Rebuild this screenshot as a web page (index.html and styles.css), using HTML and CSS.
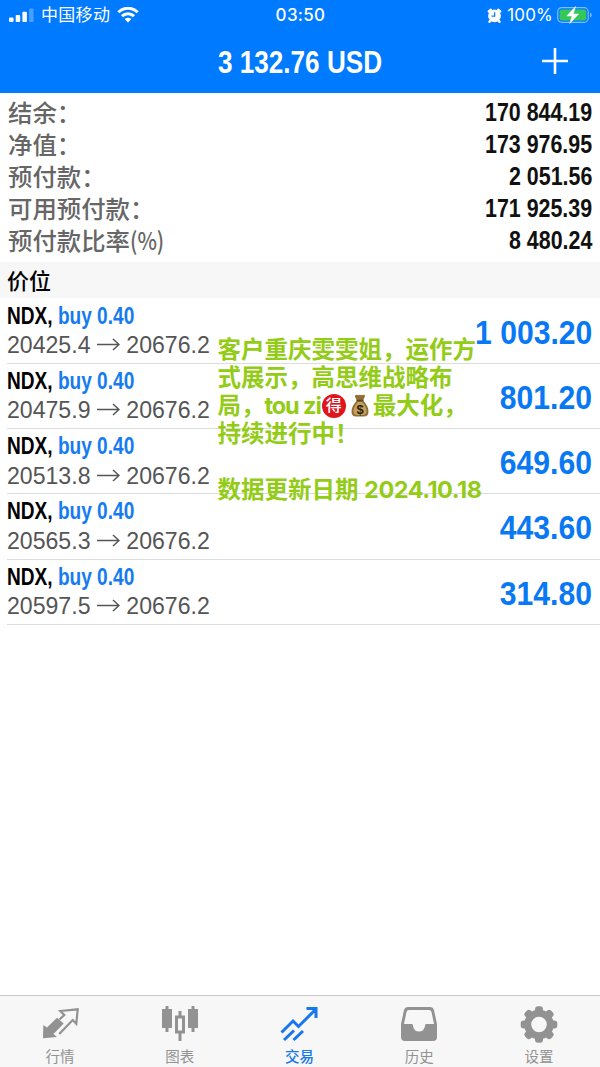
FILE: index.html
```html
<!DOCTYPE html>
<html lang="zh-CN">
    <head>
        <meta charset="utf-8">
        <title>交易</title>
        <link rel="stylesheet" href="styles.css">
    </head>
    <body>
        <header>
            <div class="status">
                <div class="carrier">
                    <svg width="25" height="14" viewBox="0 0 25 14" fill="#fff">
                        <rect x="0" y="9.5" width="4.5" height="4.5" rx="1"/>
                        <rect x="6.7" y="7" width="4.5" height="7" rx="1"/>
                        <rect x="13.4" y="3.8" width="4.5" height="10.2" rx="1"/>
                        <rect x="20.1" y="0.5" width="4.5" height="13.5" rx="1" opacity=".28"/>
                    </svg>
                    <span>中国移动</span>
                    <svg width="22" height="17" viewBox="0 0 22 17" fill="none" stroke="#fff" stroke-width="3">
                        <path d="M1.3 5.2a13.8 13.8 0 0 1 19.4 0"/>
                        <path d="M5 9.1a8.6 8.6 0 0 1 12 0"/>
                        <path d="M11 15.6L7.6 12.1a4.9 4.9 0 0 1 6.8 0z" fill="#fff" stroke="none"/>
                    </svg>
                </div>
                <div class="time">03:50</div>
                <div class="power">
                    <svg width="15" height="15" viewBox="0 0 15 15">
                        <circle cx="7.5" cy="7.8" r="6.4" fill="#fff"/>
                        <path d="M1.8 3.4l2-1.7M13.2 3.4l-2-1.7M3.5 12.5l-1 1.3M11.5 12.5l1 1.3" stroke="#fff" stroke-width="2.4" stroke-linecap="round"/>
                        <path d="M7.7 4.2v4H4.6" fill="none" stroke="#007aff" stroke-width="1.2"/>
                    </svg>
                    <span>100%</span>
                    <svg width="35" height="18" viewBox="0 0 35 18">
                        <rect x=".7" y="1.7" width="30.5" height="14.6" rx="4" fill="none" stroke="#7fbcff" stroke-width="1.2"/>
                        <path d="M33 6.5q1.8.6 1.8 2.5T33 11.5z" fill="#7fbcff"/>
                        <rect x="2.6" y="3.6" width="26.7" height="10.8" rx="2.2" fill="#35c759"/>
                        <path d="M18.5.5L9.8 10h5.3l-2.4 7.5L21.7 8h-5.4z" fill="#fff" stroke="#fff" stroke-width=".5"/>
                    </svg>
                </div>
            </div>
            <div class="titlebar">
                <h1>3 132.76 USD</h1>
                <svg class="plus" width="28" height="28" viewBox="0 0 28 28" stroke="#fff" stroke-width="2.6">
                    <path d="M1 13h26M14 0v26"/>
                </svg>
            </div>
        </header>

        <dl class="account">
            <div><dt>结余：</dt><dd>170 844.19</dd></div>
            <div><dt>净值：</dt><dd>173 976.95</dd></div>
            <div><dt>预付款：</dt><dd>2 051.56</dd></div>
            <div><dt>可用预付款：</dt><dd>171 925.39</dd></div>
            <div><dt>预付款比率<span class="unit">(%)</span></dt><dd>8 480.24</dd></div>
        </dl>

        <h2>价位</h2>

        <main>
            <ul class="positions">
                <li>
                    <div><p class="deal">NDX, <b>buy 0.40</b></p><p class="price">20425.4 <svg class="arrow" viewBox="0 0 23 13"><path d="M0 6.5h22M16 1l6 5.5-6 5.5"/></svg> 20676.2</p></div>
                    <div class="profit">1 003.20</div>
                </li>
                <li>
                    <div><p class="deal">NDX, <b>buy 0.40</b></p><p class="price">20475.9 <svg class="arrow" viewBox="0 0 23 13"><path d="M0 6.5h22M16 1l6 5.5-6 5.5"/></svg> 20676.2</p></div>
                    <div class="profit">801.20</div>
                </li>
                <li>
                    <div><p class="deal">NDX, <b>buy 0.40</b></p><p class="price">20513.8 <svg class="arrow" viewBox="0 0 23 13"><path d="M0 6.5h22M16 1l6 5.5-6 5.5"/></svg> 20676.2</p></div>
                    <div class="profit">649.60</div>
                </li>
                <li>
                    <div><p class="deal">NDX, <b>buy 0.40</b></p><p class="price">20565.3 <svg class="arrow" viewBox="0 0 23 13"><path d="M0 6.5h22M16 1l6 5.5-6 5.5"/></svg> 20676.2</p></div>
                    <div class="profit">443.60</div>
                </li>
                <li>
                    <div><p class="deal">NDX, <b>buy 0.40</b></p><p class="price">20597.5 <svg class="arrow" viewBox="0 0 23 13"><path d="M0 6.5h22M16 1l6 5.5-6 5.5"/></svg> 20676.2</p></div>
                    <div class="profit">314.80</div>
                </li>
            </ul>
            <div class="note">
                <p>客户重庆雯雯姐，运作方<br>式展示，高思维战略布<br>局，<span class="latin">tou zi</span><span class="seal">得</span><svg class="bag" viewBox="0 0 18 23">
                    <path d="M6 6.5Q3.5 2.5 4 1.500 5 .3 7 1.200 9 .2 11 1.200 13.500.3 14 1.700 14 3 12 6.500 17.500 12 17.500 17.500 17.500 22.500 13 22.500H5Q.5 22.500.5 17.500.5 12 6 6.500z" fill="#8f6f35"/>
                    <path d="M7 8Q3 12 2.5 17q0 3.5 3 4h7q3-.5 3-4Q15 12 11 8z" fill="#c4a25c"/>
                    <path d="M5.5 6.5h7" stroke="#5e4520" stroke-width="1.6"/>
                    <text x="9" y="19.5" text-anchor="middle">$</text>
                </svg>最大化，<br>持续进行中！</p>
                <p>数据更新日期 <span class="date">2024.10.18</span></p>
            </div>
        </main>

        <nav>
            <a>
                <svg width="38" height="38" viewBox="0 0 38 38" fill="#929292">
                    <path d="M2.3 19L6 21.5l10-9.8 6.700 5.800L12.500 28l3.500 3-14 1.300z"/>
                    <path d="M18.5 13.5L23.300 9l-4-4 17.400-1.700-1.400 14.400-3.600-3.700-13.500 14" fill="none" stroke="#929292" stroke-width="2.2"/>
                </svg>
                <span>行情</span>
            </a>
            <a>
                <svg width="38" height="38" viewBox="0 0 38 38" fill="#929292">
                    <path d="M4.500 0h3v3H11v19H7.500v4h-3v-4H1V3h3.500zM30.500 0h3v3H37v19h-3.500v4h-3v-4H27V3h3.500z"/>
                    <path fill-rule="evenodd" d="M17.500 5h3v4.500H24v18h-3.500V35h-3v-7.500H14v-18h3.500zM17 12.500v12h4v-12z"/>
                </svg>
                <span>图表</span>
            </a>
            <a class="active">
                <svg width="38" height="38" viewBox="0 0 38 38" fill="none" stroke="#1677ee" stroke-width="3">
                    <path d="M1.5 26.5L13 15l5.5 5.5L35 4M26.5 2.5H36V12M4 34l10-9.5M13.5 34l9.500-9"/>
                </svg>
                <span>交易</span>
            </a>
            <a>
                <svg width="38" height="38" viewBox="0 0 38 38">
                    <path fill="#929292" fill-rule="evenodd" d="M8 1h22q3 0 4 3l3 14v13q0 4-4 4H5q-4 0-4-4V18L4 4q1-3 4-3zM9 4Q7 4 6.500 6L4 18h8q1 0 1 2 1 5.500 6 5.500T25 20q0-2 1-2h8L31.500 6Q31 4 29 4z"/>
                </svg>
                <span>历史</span>
            </a>
            <a>
                <svg width="38" height="38" viewBox="-19 -18.5 38 38">
                    <g fill="#929292">
                        <circle r="14.8"/>
                        <g id="teeth">
                            <rect x="-4" y="-18.3" width="8" height="36.600" rx="3"/>
                            <rect x="-18.300" y="-4" width="36.600" height="8" rx="3"/>
                        </g>
                        <use href="#teeth" transform="rotate(45)"/>
                    </g>
                    <circle r="7.800" fill="#f7f7f7"/>
                </svg>
                <span>设置</span>
            </a>
        </nav>
    </body>
</html>
```
FILE: styles.css
```css
* {
    box-sizing:border-box;
    margin:0;
    padding:0;
}
body {
    width:600px;
    height:1067px;
    display:flex;
    flex-direction:column;
    background:#fff;
    font-family:'Liberation Sans', 'Noto Sans CJK SC', sans-serif;
    overflow:hidden;
}
svg {
    display:block;
    flex:none;
}
header {
    height:93px;
    background:#007aff;
    color:#fff;
}
.status {
    height:30px;
    padding:0 8px 0 9px;
    display:grid;
    grid-template-columns:1fr auto 1fr;
    align-items:center;
    font:17px/30px Inter, 'Noto Sans CJK SC', sans-serif;
}
.carrier, .power {
    display:flex;
    align-items:center;
}
.carrier {
    gap:7px;
    letter-spacing:.3px;
}
.power {
    justify-content:flex-end;
    gap:5px;
    letter-spacing:.2px;
}
.power span {
    margin-right:-1px;
}
.time {
    font-weight:500;
    letter-spacing:.3px;
}
.titlebar {
    height:63px;
    padding:0 31px;
    display:grid;
    grid-template-columns:28px 1fr 28px;
    align-items:center;
}
/* condensed look for the bold figures */
h1, dd, .deal, .profit {
    font-family:'Liberation Sans', sans-serif;
    font-weight:bold;
    white-space:nowrap;
}
h1 {
    grid-column:2;
    text-align:center;
    font-size:32px;
    line-height:62px;
    transform:scaleX(.816);
}
.account {
    height:169px;
    padding:3px 8px 0;
}
.account div {
    display:flex;
    justify-content:space-between;
    height:32px;
    line-height:32px;
}
dt {
    color:#666;
    font-family:'Noto Sans CJK SC', sans-serif;
    font-size:24.4px;
    font-weight:500;
    line-height:31px;
}
.unit {
    display:inline-block;
    transform:scaleX(.85);
    transform-origin:left;
}
dd {
    font-size:25px;
    color:#111;
    transform:scaleX(.856);
    transform-origin:right;
}
h2 {
    height:36px;
    padding-left:7px;
    background:#f7f7f7;
    font:500 22px/34px 'Noto Sans CJK SC', sans-serif;
}
main {
    position:relative;
    flex:1;
}
.positions {
    list-style:none;
    padding-top:.6px;
}
.positions li {
    height:65.3px;
    margin-left:7px;
    padding-right:8px;
    display:flex;
    justify-content:space-between;
    border-bottom:1px solid #dcdcde;
}
.deal {
    font-size:24px;
    line-height:33.6px;
    transform:scaleX(.795);
    transform-origin:left;
}
.deal b {
    color:#167bf0;
}
.price {
    font-size:23.1px;
    line-height:27px;
    color:#555;
    white-space:nowrap;
}
.arrow {
    display:inline-block;
    width:23px;
    height:13px;
    vertical-align:2px;
    fill:none;
    stroke:#555;
    stroke-width:1.5;
}
.profit {
    font-size:34px;
    line-height:66.6px;
    color:#0878f4;
    transform:scaleX(.886);
    transform-origin:right;
}
/* caption laid over the list */
.note {
    position:absolute;
    left:217.5px;
    top:38px;
    color:#93cc16;
    font:bold 23.5px/28px Inter, 'Noto Sans CJK SC', sans-serif;
    white-space:nowrap;
}
.note p + p {
    margin-top:28px;
}
.latin {
    letter-spacing:-1.1px;
}
.date {
    letter-spacing:-.5px;
}
.seal {
    display:inline-block;
    width:24px;
    height:24px;
    border-radius:50%;
    background:#e0141c;
    color:#fff;
    font-size:16px;
    font-weight:500;
    line-height:23px;
    text-align:center;
    vertical-align:top;
    margin:2px 0 0 1px;
}
.bag {
    display:inline-block;
    width:18px;
    height:23px;
    margin:2px 4px 0 5px;
    vertical-align:top;
}
.bag text {
    font:bold 13px 'Liberation Sans', sans-serif;
    fill:#2c210e;
}
nav {
    height:72px;
    padding-right:1px;
    display:grid;
    grid-template-columns:repeat(5, 1fr);
    background:#f7f7f7;
    border-top:1px solid #c8c8c8;
}
nav a {
    display:flex;
    flex-direction:column;
    align-items:center;
    padding-top:9.5px;
    color:#929292;
    font:14.5px/20px 'Noto Sans CJK SC', sans-serif;
}
nav span {
    margin-top:2px;
}
nav .active {
    color:#1677ee;
    font-weight:500;
}
```
